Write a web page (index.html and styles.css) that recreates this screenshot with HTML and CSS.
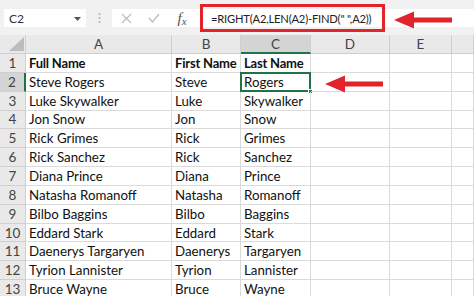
FILE: index.html
```html
<!DOCTYPE html>
<html>
<head>
<meta charset="utf-8">
<link rel="stylesheet" href="styles.css">
</head>
<body>
<div class="app">
  <div class="toolbar">
    <div class="namebox">
      <span class="ref">C2</span>
      <svg class="caret" width="7" height="4" viewBox="0 0 7 4"><path d="M0 0 L7 0 L3.5 4 Z" fill="#555"/></svg>
    </div>
    <div class="grip">
      <svg width="3" height="12" viewBox="0 0 3 12"><circle cx="1.5" cy="2" r="1.1" fill="#b5b5b5"/><circle cx="1.5" cy="6" r="1.1" fill="#b5b5b5"/><circle cx="1.5" cy="10" r="1.1" fill="#b5b5b5"/></svg>
    </div>
    <div class="formula">
      <span class="fbtn">
        <svg width="11" height="11" viewBox="0 0 11 11"><path d="M1 1 L10 10 M10 1 L1 10" stroke="#bdbdbd" stroke-width="1.2" fill="none"/></svg>
      </span>
      <span class="fbtn">
        <svg width="12" height="10" viewBox="0 0 12 10"><path d="M1 5 L4.5 9 L11 1" stroke="#bdbdbd" stroke-width="1.3" fill="none"/></svg>
      </span>
      <span class="fbtn fx"><i>f</i><span class="fxsub">x</span></span>
      <span class="ftext">=RIGHT(A2,LEN(A2)-FIND(" ",A2))</span>
    </div>
  </div>

  <div class="sheet">
    <div class="hd corner"><svg class="tri" width="15" height="14" viewBox="0 0 15 14"><path d="M15 0 L15 14 L0 14 Z" fill="#bcbcbc"/></svg></div>
    <div class="hd col">A</div>
    <div class="hd col">B</div>
    <div class="hd col sel-col">C</div>
    <div class="hd col">D</div>
    <div class="hd col">E</div>
    <div class="hd col"></div>

    <div class="hd row">1</div><div class="c b">Full Name</div><div class="c b">First Name</div><div class="c b">Last Name</div><div class="c"></div><div class="c"></div><div class="c"></div>
    <div class="hd row sel-row">2</div><div class="c">Steve Rogers</div><div class="c">Steve</div><div class="c active">Rogers<span class="selbox"><span class="handle"></span></span></div><div class="c"></div><div class="c"></div><div class="c"></div>
    <div class="hd row">3</div><div class="c">Luke Skywalker</div><div class="c">Luke</div><div class="c">Skywalker</div><div class="c"></div><div class="c"></div><div class="c"></div>
    <div class="hd row">4</div><div class="c">Jon Snow</div><div class="c">Jon</div><div class="c">Snow</div><div class="c"></div><div class="c"></div><div class="c"></div>
    <div class="hd row">5</div><div class="c">Rick Grimes</div><div class="c">Rick</div><div class="c">Grimes</div><div class="c"></div><div class="c"></div><div class="c"></div>
    <div class="hd row">6</div><div class="c">Rick Sanchez</div><div class="c">Rick</div><div class="c">Sanchez</div><div class="c"></div><div class="c"></div><div class="c"></div>
    <div class="hd row">7</div><div class="c">Diana Prince</div><div class="c">Diana</div><div class="c">Prince</div><div class="c"></div><div class="c"></div><div class="c"></div>
    <div class="hd row">8</div><div class="c">Natasha Romanoff</div><div class="c">Natasha</div><div class="c">Romanoff</div><div class="c"></div><div class="c"></div><div class="c"></div>
    <div class="hd row">9</div><div class="c">Bilbo Baggins</div><div class="c">Bilbo</div><div class="c">Baggins</div><div class="c"></div><div class="c"></div><div class="c"></div>
    <div class="hd row">10</div><div class="c">Eddard Stark</div><div class="c">Eddard</div><div class="c">Stark</div><div class="c"></div><div class="c"></div><div class="c"></div>
    <div class="hd row">11</div><div class="c">Daenerys Targaryen</div><div class="c">Daenerys</div><div class="c">Targaryen</div><div class="c"></div><div class="c"></div><div class="c"></div>
    <div class="hd row">12</div><div class="c">Tyrion Lannister</div><div class="c">Tyrion</div><div class="c">Lannister</div><div class="c"></div><div class="c"></div><div class="c"></div>
    <div class="hd row">13</div><div class="c">Bruce Wayne</div><div class="c">Bruce</div><div class="c">Wayne</div><div class="c"></div><div class="c"></div><div class="c"></div>
  </div>

  <div class="annot-box"></div>
  <svg class="arrow arrow-top" width="60" height="18" viewBox="0 0 60 18"><path d="M0 9 L20 0.5 L20 6.5 L58 6.5 L58 11.5 L20 11.5 L20 17.5 Z" fill="#e2232c"/></svg>
  <svg class="arrow arrow-cell" width="60" height="18" viewBox="0 0 60 18"><path d="M0 9 L20 0.5 L20 6.5 L58 6.5 L58 11.5 L20 11.5 L20 17.5 Z" fill="#e2232c"/></svg>
</div>
</body>
</html>
```

FILE: styles.css
```css
* { box-sizing: border-box; }
html, body { margin: 0; padding: 0; }
body {
  width: 474px;
  height: 296px;
  overflow: hidden;
  background: #ffffff;
  font-family: Lato, "Liberation Sans", sans-serif;
}
.app {
  position: relative;
  width: 474px;
  height: 296px;
  overflow: hidden;
}

/* formula bar */
.toolbar {
  height: 35px;
  background: #f1f1f1;
  display: flex;
  align-items: flex-start;
  padding-top: 9px;
}
.namebox {
  margin-left: 4px;
  width: 82px;
  height: 18px;
  background: #fff;
  display: flex;
  align-items: center;
  justify-content: space-between;
  padding: 0 5px 0 5px;
  font-family: Lato, "Liberation Sans", sans-serif;
  font-size: 12px;
  color: #333;
}
.caret { margin-top: 1px; }
.grip {
  width: 26px;
  height: 18px;
  display: flex;
  align-items: center;
  justify-content: center;
}
.formula {
  flex: 1;
  height: 18px;
  background: #fff;
  display: flex;
  align-items: center;
}
.fbtn {
  width: 28px;
  height: 18px;
  display: flex;
  align-items: center;
  justify-content: center;
}
.fx {
  font-family: "Liberation Serif", serif;
  font-size: 15px;
  color: #555;
}
.fxsub { font-size: 11px; font-style: italic; margin-top: 5px; }
.ftext {
  margin-left: 15px;
  font-family: Lato, "Liberation Sans", sans-serif;
  font-size: 11.2px;
  letter-spacing: -0.2px;
  color: #222;
  white-space: nowrap;
}

/* sheet */
.sheet {
  display: grid;
  grid-template-columns: 26px 146px 69px 70px 79px 62px 22px;
  grid-template-rows: 19px;
  grid-auto-rows: 18.85px;
}
.hd {
  background: #e9e9e9;
  color: #444;
  font-size: 13.5px;
  display: flex;
  align-items: center;
  justify-content: center;
  border-right: 1px solid #cfcfcf;
  border-bottom: 1px solid #cfcfcf;
}
.corner {
  position: relative;
  justify-content: flex-end;
  align-items: flex-end;
  padding: 0 1px 2px 0;
}
.tri { display: block; }
.sel-col {
  background: #d4d4d4;
  border-bottom: 2px solid #217346;
}
.sel-row {
  background: #d4d4d4;
  border-right: 2px solid #217346;
}
.c {
  border-right: 1px solid #dadada;
  border-bottom: 1px solid #dadada;
  font-size: 13.3px;
  color: #111;
  padding-left: 3px;
  white-space: nowrap;
  overflow: visible;
  display: flex;
  align-items: center;
  position: relative;
}
.b { font-weight: 700; font-size: 13px; letter-spacing: -0.2px; }
.selbox {
  position: absolute;
  left: -1px;
  top: -1px;
  right: -1px;
  bottom: -1px;
  border: 2px solid #217346;
}
.handle {
  position: absolute;
  right: -4px;
  bottom: -4px;
  width: 5px;
  height: 5px;
  background: #217346;
  border: 1px solid #fff;
}

/* annotations */
.annot-box {
  position: absolute;
  left: 200px;
  top: 4px;
  width: 185px;
  height: 28px;
  border: 3px solid #e2232c;
}
.arrow { position: absolute; }
.arrow-top { left: 394px; top: 11px; }
.arrow-cell { left: 325px; top: 75px; }
```
